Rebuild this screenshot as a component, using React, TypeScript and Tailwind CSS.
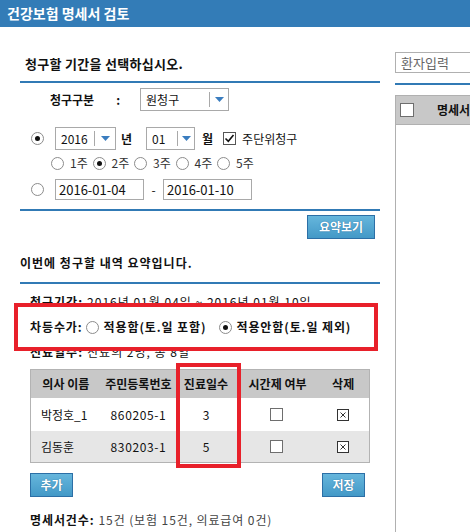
import React from "react";

const FONT = { fontFamily: '"Noto Sans CJK KR", "Noto Sans", sans-serif' };

function Radio({ checked }: { checked?: boolean }) {
  return (
    <span className="flex h-[13px] w-[13px] shrink-0 items-center justify-center rounded-full border border-[#8c8c8c] bg-white">
      {checked && <span className="h-[5px] w-[5px] rounded-full bg-[#111]" />}
    </span>
  );
}

function Box({ w = 13 }: { w?: number }) {
  return (
    <span
      className="block shrink-0 border border-[#6e6e6e] bg-white"
      style={{ width: w, height: w }}
    />
  );
}

function CheckedBox() {
  return (
    <span className="flex h-[13px] w-[13px] shrink-0 items-center justify-center border border-[#555] bg-white">
      <svg width="11" height="11" viewBox="0 0 11 11">
        <path d="M1.5 5.5 L4.3 8.3 L9.5 2" fill="none" stroke="#111" strokeWidth="1.6" />
      </svg>
    </span>
  );
}

function XBox() {
  return (
    <span className="flex h-[12px] w-[12px] items-center justify-center border border-[#333] bg-white">
      <svg width="8" height="8" viewBox="0 0 8 8">
        <path d="M1.5 1.5 L6.5 6.5 M6.5 1.5 L1.5 6.5" stroke="#333" strokeWidth="1" />
      </svg>
    </span>
  );
}

function Select({ value, width, split }: { value: string; width: number; split: number }) {
  return (
    <div
      className="flex h-full shrink-0 items-center border border-[#a9a9a9] bg-white text-[12px] font-normal text-[#111]"
      style={{ width }}
    >
      <span className="pl-[5px]" style={{ width: split }}>
        {value}
      </span>
      <span className="h-[15px] w-px bg-[#a9a9a9]" />
      <span className="flex flex-1 items-center justify-center">
        <svg width="9" height="5" viewBox="0 0 9 5">
          <polygon points="0,0 9,0 4.5,5" fill="#3a7dbf" />
        </svg>
      </span>
    </div>
  );
}

function BlueButton({ label, w }: { label: string; w: number }) {
  return (
    <button
      className="flex h-[24px] items-center justify-center border border-[#2c6fa6] bg-linear-to-b from-[#66b6dc] to-[#4399c7] text-[12px] font-bold text-white [text-shadow:0_0_1px_#1d5a8a]"
      style={{ width: w }}
    >
      {label}
    </button>
  );
}

function Rule() {
  return <div className="h-[2px] w-full bg-[#317ab5]" />;
}

const weeks = ["1주", "2주", "3주", "4주", "5주"];

const doctors = [
  { name: "박정호_1", id: "860205-1", days: "3", bg: "bg-white", h: "h-[33px]" },
  { name: "김동훈", id: "830203-1", days: "5", bg: "bg-[#e6e6e6]", h: "h-[31px]" },
];

export default function App() {
  return (
    <div className="h-[532px] w-[470px] overflow-hidden bg-white text-[#111]" style={FONT}>
      <div className="flex h-[27px] items-center bg-[#337cb7] pl-[7px] text-[14px] font-bold text-white">
        건강보험 명세서 검토
      </div>

      <div className="flex">
        {/* left column */}
        <div className="w-[395px] shrink-0 pl-[20px] pr-[15px]">
          <div className="mt-[25px] flex h-[24px] items-center pl-[5px] text-[13px] font-bold tracking-[0.3px]">
            청구할 기간을 선택하십시오.
          </div>
          <div className="mt-[5px]">
            <Rule />
          </div>

          <div className="mt-[5px] flex h-[23px] items-center text-[12px] font-bold">
            <span className="pl-[30px]">청구구분</span>
            <span className="ml-[22px]">:</span>
            <div className="ml-[20px] h-full">
              <Select value="원청구" width={89} split={68} />
            </div>
          </div>

          <div className="mt-[16px] flex h-[23px] items-center text-[12px]">
            <span className="pl-[11px]">
              <Radio checked />
            </span>
            <div className="ml-[11px] h-full">
              <Select value="2016" width={61} split={38} />
            </div>
            <span className="ml-[5px] font-bold">년</span>
            <div className="ml-[14px] h-full">
              <Select value="01" width={49} split={30} />
            </div>
            <span className="ml-[7px] font-bold">월</span>
            <span className="ml-[10px]">
              <CheckedBox />
            </span>
            <span className="ml-[6px] text-[12px]">주단위청구</span>
          </div>

          <div className="mt-[3px] flex h-[20px] items-center pl-[31px] text-[12px] text-[#333]">
            {weeks.map((w, i) => (
              <div key={w} className="flex w-[41.5px] items-center gap-[6px]">
                <Radio checked={i === 1} />
                <span>{w}</span>
              </div>
            ))}
          </div>

          <div className="mt-[6px] flex h-[21px] items-center text-[12px]">
            <span className="pl-[11px]">
              <Radio />
            </span>
            <div className="ml-[11px] flex h-full w-[89px] items-center border border-[#a9a9a9] pl-[3px] text-[13px]">
              2016-01-04
            </div>
            <span className="w-[19px] text-center">-</span>
            <div className="flex h-full w-[89px] items-center border border-[#a9a9a9] pl-[3px] text-[13px]">
              2016-01-10
            </div>
          </div>

          <div className="mt-[9px]">
            <Rule />
          </div>

          <div className="mt-[4px] flex justify-end pr-[5px]">
            <BlueButton label="요약보기" w={68} />
          </div>

          <div className="mt-[16px] flex h-[16px] items-center text-[12px] font-bold tracking-[1px]">
            이번에 청구할 내역 요약입니다.
          </div>
          <div className="mt-[11px]">
            <Rule />
          </div>

          <div className="mt-[10px] flex h-[16px] items-center pl-[10px] text-[12px] tracking-[1px]">
            <span className="font-bold">청구기간:</span>
            <span className="ml-[4px]">2016년 01월 04일 ~ 2016년 01월 10일</span>
          </div>

          {/* highlighted row */}
          <div className="relative z-10 -mt-[7px] ml-[-6px] flex h-[48px] w-[364px] items-center border-4 border-[#e8202a] bg-white pl-[12px] text-[12px] font-bold tracking-[0.9px]">
            <span>차등수가:</span>
            <span className="ml-[3px]">
              <Radio />
            </span>
            <span className="ml-[5px]">적용함(토.일 포함)</span>
            <span className="ml-[13px]">
              <Radio checked />
            </span>
            <span className="ml-[4px]">적용안함(토.일 제외)</span>
          </div>

          <div className="-mt-[7px] flex h-[16px] items-center pl-[10px] text-[12px] tracking-[1px]">
            <span className="font-bold">진료일수:</span>
            <span className="ml-[4px]">진료의 2명, 총 8일</span>
          </div>

          <div className="relative ml-[10px] mt-[9px] w-[340px] border border-[#b3b3b3] text-[12px]">
            <div className="flex h-[28px] items-center bg-[#c8c8c8] font-bold">
              <span className="w-[70px] text-center">의사 이름</span>
              <span className="w-[76px] text-center">주민등록번호</span>
              <span className="w-[60px] text-center">진료일수</span>
              <span className="w-[82px] pl-[2px] text-center">시간제 여부</span>
              <span className="w-[52px] text-center">삭제</span>
            </div>
            {doctors.map((d) => (
              <div key={d.id} className={`flex items-center ${d.h} ${d.bg}`}>
                <span className="w-[70px] pl-[10px]">{d.name}</span>
                <span className="w-[76px] text-center tracking-[0.6px]">{d.id}</span>
                <span className="w-[60px] text-center">{d.days}</span>
                <span className="flex w-[82px] justify-center">
                  <Box />
                </span>
                <span className="flex w-[52px] justify-center">
                  <XBox />
                </span>
              </div>
            ))}
            {/* annotation around 진료일수 column */}
            <div className="pointer-events-none absolute left-[145px] top-[-7px] h-[105px] w-[65px] border-4 border-[#e8202a]" />
          </div>

          <div className="mt-[10px] flex justify-between pl-[10px] pr-[15px]">
            <BlueButton label="추가" w={43} />
            <BlueButton label="저장" w={43} />
          </div>

          <div className="mt-[15px] flex h-[16px] items-center pl-[10px] text-[12px] tracking-[0.9px]">
            <span className="font-bold">명세서건수:</span>
            <span className="ml-[4px] text-[#444]">15건 (보험 15건, 의료급여 0건)</span>
          </div>
        </div>

        {/* right column */}
        <div className="flex h-[505px] min-w-0 flex-1 flex-col overflow-hidden">
          <div className="mt-[25px] flex h-[21px] w-[120px] shrink-0 items-center border border-[#b0b0b0] pl-[5px] text-[13px] text-[#666]">
            환자입력
          </div>
          <div className="mt-[10px] shrink-0">
            <div className="h-[2px] w-[120px] bg-[#317ab5]" />
          </div>
          <div className="mt-[10px] flex h-[30px] w-[120px] shrink-0 items-center border border-[#b0b0b0] bg-[#c8c8c8] pl-[4px] text-[12px] font-bold">
            <Box w={14} />
            <span className="ml-[23px]">명세서</span>
          </div>
          <div className="w-[120px] flex-1 border-l border-[#b0b0b0]" />
        </div>
      </div>
    </div>
  );
}
